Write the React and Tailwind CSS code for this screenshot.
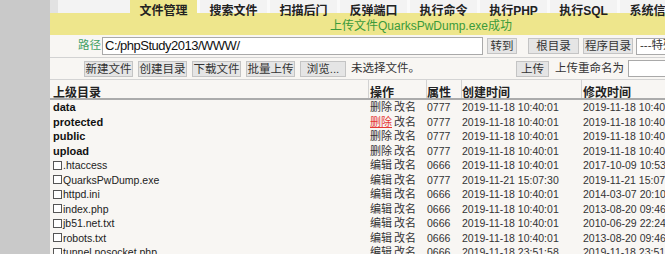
import React from "react";

const tabs = ["文件管理", "搜索文件", "扫描后门", "反弹端口", "执行命令", "执行PHP", "执行SQL", "系统信息"];

const rows = [
  { name: "data", dir: true, attr: "0777", c: "2019-11-18 10:40:01", m: "2019-11-18 10:40:01" },
  { name: "protected", dir: true, hot: true, attr: "0777", c: "2019-11-18 10:40:01", m: "2019-11-18 10:40:01" },
  { name: "public", dir: true, attr: "0777", c: "2019-11-18 10:40:01", m: "2019-11-18 10:40:01" },
  { name: "upload", dir: true, attr: "0777", c: "2019-11-18 10:40:01", m: "2019-11-18 10:40:01" },
  { name: ".htaccess", attr: "0666", c: "2019-11-18 10:40:01", m: "2017-10-09 10:53:12" },
  { name: "QuarksPwDump.exe", attr: "0777", c: "2019-11-21 15:07:30", m: "2019-11-21 15:07:30" },
  { name: "httpd.ini", attr: "0666", c: "2019-11-18 10:40:01", m: "2014-03-07 20:10:22" },
  { name: "index.php", attr: "0666", c: "2019-11-18 10:40:01", m: "2013-08-20 09:46:10" },
  { name: "jb51.net.txt", attr: "0666", c: "2019-11-18 10:40:01", m: "2010-06-29 22:24:06" },
  { name: "robots.txt", attr: "0666", c: "2019-11-18 10:40:01", m: "2013-08-20 09:46:10" },
  { name: "tunnel.nosocket.php", attr: "0666", c: "2019-11-18 23:51:58", m: "2019-11-18 23:51:58" },
];

const Btn = ({ children, w }) => (
  <div className={`${w} shrink-0 h-[16px] flex items-center justify-center bg-[#e5e5e5] border border-[#c4c4c4] text-[11.5px] leading-[14px] text-[#333] whitespace-nowrap`}>
    {children}
  </div>
);

const App = () => {
  return (
    <div
      className="w-[665px] h-[254px] overflow-hidden flex bg-[#f8f6f3] text-[#333]"
      style={{ fontFamily: '"Liberation Sans", "Noto Sans CJK SC", sans-serif' }}
    >
      <div className="w-[50px] shrink-0 bg-[#c9c9c9]" />

      <div className="flex-1 min-w-0 flex flex-col overflow-hidden">
        {/* TABS */}
        <div className="relative z-10 h-[13px] shrink-0 flex bg-[#fafafa] whitespace-nowrap">
          <div className="w-[8px] shrink-0 bg-[#e2e2e2]" />
          <div className="w-[72px] shrink-0 bg-[#f3f3f3]" />
          <div className="flex gap-[3px]">
            {tabs.map((t, i) => (
              <div
                key={t}
                className={`w-[67px] shrink-0 h-[13px] text-center text-[12px] font-bold leading-[12px] pt-[5px] text-[#222] ${i === 0 ? "bg-[#eee68c]" : "bg-[#f3f3f3]"}`}
              >
                {t}
              </div>
            ))}
          </div>
        </div>

        {/* MESSAGE */}
        <div className="h-[22px] shrink-0 bg-[#eee68c] flex items-center pl-[280px] pt-[3px] text-[12px] text-[#3a9a3a] whitespace-nowrap">
          上传文件QuarksPwDump.exe成功
        </div>

        {/* PATH ROW */}
        <div className="h-[23px] shrink-0 flex items-center pl-[28px] border-b border-[#d2d2d2] whitespace-nowrap">
          <span className="shrink-0 text-[11.5px] text-[#3f9f62] mr-[1px]">路径</span>
          <div className="w-[381px] shrink-0 h-[18px] bg-white border border-[#a9a9a9] flex items-center pl-[2px] text-[13px] tracking-[-0.5px] text-[#111]">
            C:/phpStudy2013/WWW/
          </div>
          <div className="shrink-0 ml-[4px]"><Btn w="w-[30px]">转到</Btn></div>
          <div className="shrink-0 ml-[11px]"><Btn w="w-[51px]">根目录</Btn></div>
          <div className="shrink-0 ml-[4px]"><Btn w="w-[50px]">程序目录</Btn></div>
          <div className="ml-[3px] w-[90px] shrink-0 h-[17px] bg-white border border-[#a9a9a9] flex items-center pl-[3px] text-[11.5px] text-[#333]">
            ---特殊目录---
          </div>
        </div>

        {/* UPLOAD ROW */}
        <div className="h-[22px] shrink-0 flex items-center pl-[34px] border-b border-[#d4d4d4] whitespace-nowrap">
          <div className="flex gap-[5px] shrink-0">
            <Btn w="w-[49px]">新建文件</Btn>
            <Btn w="w-[49px]">创建目录</Btn>
            <Btn w="w-[49px]">下载文件</Btn>
            <Btn w="w-[49px]">批量上传</Btn>
            <Btn w="w-[46px]">浏览...</Btn>
          </div>
          <span className="shrink-0 ml-[5px] text-[11.5px] text-[#333]">未选择文件。</span>
          <div className="shrink-0 ml-[96px]"><Btn w="w-[33px]">上传</Btn></div>
          <span className="shrink-0 ml-[6px] text-[11.5px] text-[#333]">上传重命名为</span>
          <div className="ml-[4px] w-[80px] shrink-0 h-[17px] bg-white border border-[#a9a9a9]" />
        </div>

        {/* TABLE HEADER */}
        <div className="h-[20px] shrink-0 flex border-b-2 border-[#ababab] text-[12px] font-bold leading-[12px] text-[#222] whitespace-nowrap">
          <div className="w-[318px] shrink-0 pl-[3px] pt-[7px]">上级目录</div>
          <div className="w-[58px] shrink-0 pl-[1px] pt-[7px] border-l border-[#d2d2d2]">操作</div>
          <div className="w-[35px] shrink-0 pt-[7px] border-l border-[#d2d2d2]">属性</div>
          <div className="w-[120px] shrink-0 pt-[7px] border-l border-[#d2d2d2]">创建时间</div>
          <div className="w-[120px] shrink-0 pl-[1px] pt-[7px] border-l border-[#d2d2d2]">修改时间</div>
        </div>

        {/* ROWS */}
        <div className="flex flex-col">
          {rows.map((r) => (
            <div key={r.name} className="h-[14.5px] shrink-0 flex items-center whitespace-nowrap text-[10.5px] leading-[14px]">
              <div className="w-[318px] shrink-0 pl-[3px] flex items-center">
                {r.dir ? (
                  <span className="font-bold text-[11px] text-[#111]">{r.name}</span>
                ) : (
                  <>
                    <span className="w-[9px] h-[9px] border border-[#555] bg-white mr-[1px] shrink-0" />
                    <span className="text-[#222]">{r.name}</span>
                  </>
                )}
              </div>
              <div className="w-[58px] shrink-0 pl-[2px] flex gap-[2px] text-[11px]">
                {r.dir ? (
                  <span className={r.hot ? "text-[#e53935] underline" : ""}>删除</span>
                ) : (
                  <span>编辑</span>
                )}
                <span>改名</span>
              </div>
              <div className="w-[35px] shrink-0 pl-[1px]">{r.attr}</div>
              <div className="w-[120px] shrink-0 pl-[1px]">{r.c}</div>
              <div className="w-[120px] shrink-0 pl-[2px]">{r.m}</div>
            </div>
          ))}
        </div>
      </div>
    </div>
  );
};

export default App;
